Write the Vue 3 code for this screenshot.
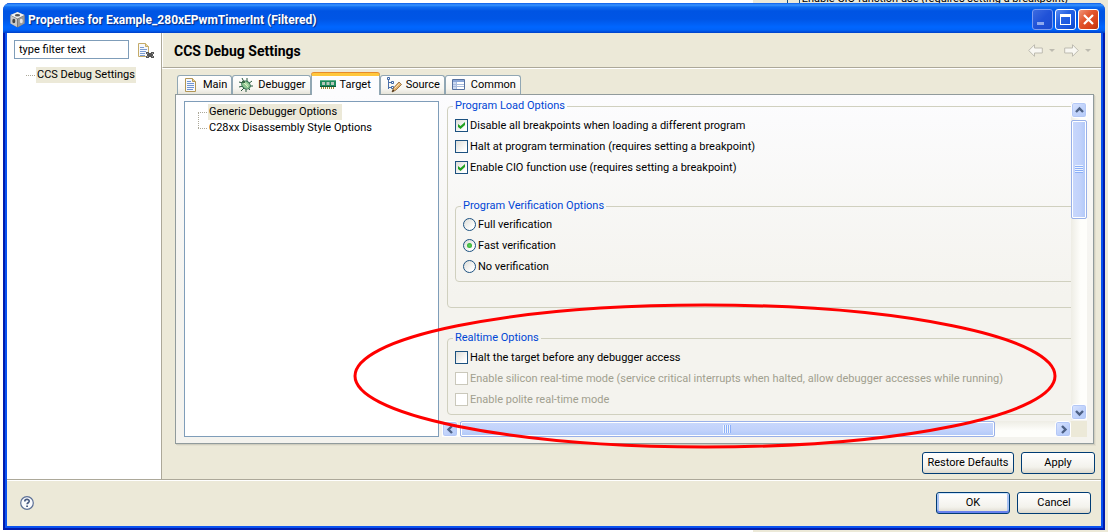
<script setup>
import { ref, reactive } from 'vue'

const filter = ref('type filter text')
const activeTab = ref('Target')
const tabs = [
  { name: 'Main', icon: 'page' },
  { name: 'Debugger', icon: 'bug' },
  { name: 'Target', icon: 'chip' },
  { name: 'Source', icon: 'source' },
  { name: 'Common', icon: 'table' }
]
const loadOptions = reactive([
  { id: 'bp', label: 'Disable all breakpoints when loading a different program', on: true },
  { id: 'halt', label: 'Halt at program termination (requires setting a breakpoint)', on: false },
  { id: 'cio', label: 'Enable CIO function use (requires setting a breakpoint)', on: true }
])
const verification = ref('Fast verification')
const verifyOptions = ['Full verification', 'Fast verification', 'No verification']
const realtimeOptions = reactive([
  { id: 'access', label: 'Halt the target before any debugger access', on: false, disabled: false },
  { id: 'silicon', label: 'Enable silicon real-time mode (service critical interrupts when halted, allow debugger accesses while running)', on: false, disabled: true },
  { id: 'polite', label: 'Enable polite real-time mode', on: false, disabled: true }
])
</script>

<template>
  <div class="desktop">
    <div class="behind" aria-hidden="true">
      <span class="behind-box"></span>
      <span>Enable CIO function use (requires setting a breakpoint)</span>
    </div>
    <section class="window">
      <header class="titlebar">
        <svg class="app-icon" width="17" height="17" viewBox="0 0 17 17">
          <path d="M8.500 1 15.500 4v8.500L8.500 16.500 1.500 12.500V4z" fill="#777" />
          <path d="M8.500 1 15.500 4 8.500 7.500 1.500 4z" fill="#f2f2f2" />
          <path d="M1.500 4.500 8 8v8L1.500 12.500z" fill="#c8c8c8" />
          <path d="M15.500 4.500 9 8v8l6.500-3.500z" fill="#999" />
          <ellipse cx="8.500" cy="4.200" rx="2.600" ry="1.200" fill="#555" />
          <ellipse cx="4.800" cy="10" rx="1.500" ry="2.200" fill="#444" />
          <ellipse cx="12.300" cy="10" rx="1.500" ry="2.200" fill="#e4e4e4" />
        </svg>
        <h1>Properties for Example_280xEPwmTimerInt (Filtered)</h1>
        <button class="cap dim" aria-label="Minimize">
          <svg width="19" height="19" viewBox="0 0 19 19"><path d="M4 12h7v3H4z" fill="#8fa9ee" /></svg>
        </button>
        <button class="cap" aria-label="Maximize">
          <svg width="19" height="19" viewBox="0 0 19 19"><path d="M4 4h11v11H4zM5 7v7h9V7z" fill="#fff" fill-rule="evenodd" /></svg>
        </button>
        <button class="cap close" aria-label="Close">
          <svg width="19" height="19" viewBox="0 0 19 19"><path d="M5 5l9 9M14 5l-9 9" stroke="#fff" stroke-width="2.200" /></svg>
        </button>
      </header>

      <div class="body">
        <aside class="sidebar">
          <div class="filter">
            <input v-model="filter" type="text" aria-label="Filter settings" />
            <button class="plain" aria-label="Clear filter">
              <svg width="16" height="16" viewBox="0 0 16 16">
                <path d="M.5 .5h7l3 3v10H.5z" fill="#f6f8fd" stroke="#c5ab68" />
                <path d="M7.500 .5v3h3" fill="#ecd99f" stroke="#c5ab68" />
                <path d="M2 4.500h4M2 6.500h7M2 8.500h6M2 10.500h5M2 12.500h5" stroke="#7c9ccf" />
                <path d="M8 9h3v1h2V9h3v2h-1v2h1v2h-3v-1h-2v1H8v-2h1v-2H8z" fill="#555" />
                <path d="M9 10h1v1H9zM14 10h1v1h-1zM9 13h1v1H9zM14 13h1v1h-1z" fill="#999" />
              </svg>
            </button>
          </div>
          <ul class="nav-tree">
            <li><a href="#settings">CCS Debug Settings</a></li>
          </ul>
        </aside>

        <main class="main">
          <div class="page-head">
            <h2>CCS Debug Settings</h2>
            <button class="plain" aria-label="Back">
              <svg width="29" height="14" viewBox="0 0 29 14">
                <path d="M.7 6.500 6.500.7v3.300h7.800v5H6.500v3.300z" fill="#f8f7f2" stroke="#bdbbb0" />
                <path d="M21 5h6l-3 3z" fill="#bdbbb0" />
              </svg>
            </button>
            <button class="plain" aria-label="Forward">
              <svg width="29" height="14" viewBox="0 0 29 14">
                <path d="M14.300 6.500 8.500.7v3.300H.7v5h7.800v3.300z" fill="#f8f7f2" stroke="#bdbbb0" />
                <path d="M21 5h6l-3 3z" fill="#bdbbb0" />
              </svg>
            </button>
          </div>

          <div class="folder">
            <div class="tabs" role="tablist">
              <button
                v-for="tab in tabs"
                :key="tab.name"
                role="tab"
                class="tab"
                :class="{ active: tab.name === activeTab }"
                :aria-selected="tab.name === activeTab"
                @click="activeTab = tab.name"
              >
                <svg width="16" height="16" viewBox="0 0 16 16">
                  <g v-if="tab.icon === 'page'">
                    <path d="M2.500 1.500h7l3 3v10h-10z" fill="#f4f8ff" stroke="#b39655" />
                    <path d="M9.500 1.500v3h3" fill="#ecd591" stroke="#b39655" />
                    <path d="M4 4.500h4M4 6.500h7M4 8.500h7M4 10.500h7M4 12.500h6" stroke="#6f94d2" />
                  </g>
                  <g v-else-if="tab.icon === 'bug'">
                    <path d="M4 1l2 4M9 1v4M1 5l4 1M1 10l4-1M3 14l3-3M8 15v-3M12 13l-2-2M15 9h-4M14 4l-4 3" stroke="#27553c" fill="none" />
                    <ellipse cx="8" cy="8" rx="4.600" ry="3.700" transform="rotate(40 8 8)" fill="#8fc794" stroke="#2a6a4b" />
                    <path d="M6 6l4 4M7 5.500l3 3" stroke="#dcf2c6" />
                    <path d="M4 4h3v2H4z" fill="#396a46" />
                  </g>
                  <g v-else-if="tab.icon === 'chip'">
                    <path d="M0 3h16v7H0z" fill="#1f8a5c" />
                    <path d="M0 3h16v1H0z" fill="#62b48c" />
                    <path d="M2 5h3v3H2zM6.500 5h3v3h-3zM11 5h3v3h-3z" fill="#b6c8bb" />
                    <path d="M0 9h16v1H0z" fill="#0c5a3a" />
                    <path d="M1.500 10v2M3.500 10v2M5.500 10v2M7.500 10v2M9.500 10v2M11.500 10v2M13.500 10v2" stroke="#9c8b35" />
                  </g>
                  <g v-else-if="tab.icon === 'source'">
                    <path d="M2.500 3v9M2.500 5.500h3M2.500 10.500h3" stroke="#4a6fa9" fill="none" />
                    <path d="M1.500 .5h2v2h-2zM5.500 4.500h2v2h-2zM5.500 9.500h2v2h-2z" fill="#fff" stroke="#3f68a6" />
                    <path d="M6 15l1.500-4L13 5l2.500 2.500L10 13z" fill="#e5b26c" stroke="#8b6232" stroke-width=".8" />
                    <path d="M6 15l1-2.500L8.500 14z" fill="#3b2b1c" />
                    <path d="M8.500 11.500L13.500 6.500" stroke="#fbe3b8" />
                  </g>
                  <g v-else>
                    <path d="M1.500 2.500h12v10h-12z" fill="#fff" stroke="#56719f" />
                    <path d="M2 3h11v2H2z" fill="#8ba7d8" />
                    <path d="M2 5h3v7H2z" fill="#cbd9f1" />
                    <path d="M2 7.500h11M2 9.500h11M5.500 5v7" stroke="#a9bcdd" />
                  </g>
                </svg>
                <span>{{ tab.name }}</span>
              </button>
            </div>

            <div class="panel" role="tabpanel">
              <ul class="option-list">
                <li><a class="selected" href="#generic">Generic Debugger Options</a></li>
                <li><a href="#disassembly">C28xx Disassembly Style Options</a></li>
              </ul>

              <div class="scroller">
                <form class="viewport" @submit.prevent>
                  <fieldset class="load">
                    <legend>Program Load Options</legend>
                    <div v-for="o in loadOptions" :key="o.id" class="row">
                      <input :id="o.id" v-model="o.on" type="checkbox" />
                      <label :for="o.id">{{ o.label }}</label>
                    </div>
                    <fieldset class="verify">
                      <legend>Program Verification Options</legend>
                      <div v-for="(v, i) in verifyOptions" :key="v" class="row">
                        <input :id="'v' + i" v-model="verification" type="radio" name="verify" :value="v" />
                        <label :for="'v' + i">{{ v }}</label>
                      </div>
                    </fieldset>
                  </fieldset>
                  <fieldset>
                    <legend>Realtime Options</legend>
                    <div v-for="o in realtimeOptions" :key="o.id" class="row">
                      <input :id="o.id" v-model="o.on" type="checkbox" :disabled="o.disabled" />
                      <label :for="o.id">{{ o.label }}</label>
                    </div>
                  </fieldset>
                </form>
                <div class="bar vertical">
                  <button class="arrow" aria-label="Scroll up"><svg width="9" height="9" viewBox="0 0 9 9"><path d="M1 6l3.500-3.500L8 6" /></svg></button>
                  <div class="thumb"><i></i></div>
                  <button class="arrow last" aria-label="Scroll down"><svg width="9" height="9" viewBox="0 0 9 9"><path d="M1 3l3.500 3.500L8 3" /></svg></button>
                </div>
                <div class="bar horizontal">
                  <button class="arrow" aria-label="Scroll left"><svg width="9" height="9" viewBox="0 0 9 9"><path d="M6 1L2.500 4.500 6 8" /></svg></button>
                  <div class="thumb"><i></i></div>
                  <button class="arrow last" aria-label="Scroll right"><svg width="9" height="9" viewBox="0 0 9 9"><path d="M3 1l3.500 3.500L3 8" /></svg></button>
                </div>
                <div class="corner"></div>
              </div>
            </div>
          </div>

          <div class="actions">
            <button class="push wide">Restore Defaults</button>
            <button class="push">Apply</button>
          </div>
        </main>
      </div>

      <footer class="footer">
        <button class="plain help" aria-label="Help">
          <svg width="14" height="14" viewBox="0 0 14 14">
            <circle cx="7" cy="7" r="6.300" fill="#fafbfd" stroke="#5c7096" stroke-width="1.200" />
            <path d="M4.800 5.400c0-2.700 4.400-2.600 4.400-.2 0 1.500-2.100 1.600-2.100 3.100" fill="none" stroke="#46597f" stroke-width="1.600" />
            <path d="M6.200 9.500h1.800v1.600H6.200z" fill="#46597f" />
          </svg>
        </button>
        <button class="push default">OK</button>
        <button class="push">Cancel</button>
      </footer>
    </section>

    <svg class="marker" viewBox="0 0 704 148" preserveAspectRatio="none" aria-hidden="true">
      <ellipse cx="352" cy="74" rx="350" ry="71" fill="none" stroke="#f00" stroke-width="3" />
    </svg>
  </div>
</template>

<style>
body {
  margin: 0;
}
</style>

<style scoped>
* {
  box-sizing: border-box;
}
.desktop {
  position: relative;
  display: flex;
  min-height: 100vh;
  padding: 3px 3px 2px;
  overflow: hidden;
  background: linear-gradient(90deg, #fff 68%, #ece9d8 68%);
  color: #000;
  font: 11px/16px Roboto, "Liberation Sans", sans-serif;
}
.behind {
  position: absolute;
  top: -8px;
  left: 71%;
  display: flex;
  line-height: 14px;
}
.behind-box {
  width: 13px;
  height: 13px;
  margin-right: 2px;
  border: 1px solid #1c5180;
}
button,
input {
  font: inherit;
  color: inherit;
}
ul {
  margin: 0;
  padding: 0;
  list-style: none;
}
a {
  color: inherit;
  text-decoration: none;
}
svg {
  display: block;
}

/* window frame */
.window {
  position: relative;
  display: flex;
  flex: 1;
  flex-direction: column;
  min-width: 0;
  padding: 0 2px 2px;
  border: solid #001cae;
  border-width: 0 2px 2px;
  border-radius: 7px 7px 0 0;
  background: #0a52f0;
}
.titlebar {
  display: flex;
  align-items: center;
  height: 30px;
  margin: 0 -4px;
  padding: 3px 6px 0 6px;
  border-radius: 7px 7px 0 0;
  background: linear-gradient(#0a5be8 0, #3a95ff 2px, #0f6cf0 4px, #0054e3 8px, #0055e5 16px, #0066ff 24px, #0062f8 27px, #0040c8 30px);
}
.titlebar h1 {
  flex: 1;
  margin: 0 0 0 2px;
  color: #fff;
  font-size: 12px;
  font-weight: 700;
  line-height: 16px;
  text-shadow: 1px 1px 1px #0a2a7c;
}
.cap {
  display: grid;
  place-items: center;
  width: 21px;
  height: 21px;
  margin-left: 2px;
  padding: 0;
  border: 1px solid #fff;
  border-radius: 3px;
  background: linear-gradient(135deg, #5c8cf2, #2460e2 40%, #1a56e0 70%, #0d47c8);
}
.cap.dim {
  border-color: #7d9cf0;
  background: linear-gradient(135deg, #3d6be0, #2052d8 50%, #1b4bd0);
}
.cap.close {
  background: linear-gradient(135deg, #f0957a, #e2562f 40%, #d8421a 75%, #b83410);
}
.body {
  display: flex;
  flex: 1;
  background: #ece9d8;
  border-bottom: 1px solid #aca899;
}
.plain {
  padding: 0;
  border: 0;
  background: none;
}

/* left navigation */
.sidebar {
  flex: 0 0 154px;
  padding: 7px 7px 0;
  border-right: 1px solid #aca899;
  background: #fff;
}
.filter {
  display: flex;
  align-items: center;
  gap: 9px;
}
.filter input {
  width: 115px;
  height: 19px;
  padding: 0 4px;
  border: 1px solid #7f9db9;
  background: #fff;
}
.filter button {
  margin-top: 2px;
}
.nav-tree {
  padding: 8px 0 0 12px;
}
.nav-tree li {
  display: flex;
  align-items: center;
}
.nav-tree li::before {
  content: "";
  width: 9px;
  margin-right: 1px;
  border-top: 1px dotted #aca899;
}
.nav-tree a {
  padding: 0 1px;
  background: #ece9d8;
}

/* page area */
.main {
  display: flex;
  flex: 1;
  flex-direction: column;
  min-width: 0;
}
.page-head {
  display: flex;
  align-items: center;
  gap: 7px;
  height: 35px;
  padding: 2px 8px 0 12px;
  border-bottom: 1px solid #aca899;
  border-left: 1px solid #fff;
  box-shadow: 0 1px #fff;
}
.page-head h2 {
  flex: 1;
  margin: 0 0 0 -1px;
  font-size: 14px;
  line-height: 18px;
}
.folder {
  display: flex;
  flex: 1;
  flex-direction: column;
  padding: 5px 7px 0 13px;
}
.tabs {
  display: flex;
  align-items: flex-end;
  padding-left: 2px;
}
.tab {
  display: flex;
  align-items: center;
  gap: 4px;
  height: 19px;
  padding: 0 4px 0 5px;
  border: 1px solid #91a7b4;
  border-bottom: 0;
  border-radius: 3px 3px 0 0;
  background: linear-gradient(#fff, #f7f6f1 70%, #e6e4da);
}
.tab.active {
  position: relative;
  height: 22px;
  margin-bottom: -1px;
  padding: 0 8px 2px;
  border-top: 3px solid #ffc73c;
  background: #fcfcfe;
  box-shadow: inset 0 1px #fff, 0 -1px #e68b2c;
}
.panel {
  display: flex;
  flex: 1;
  gap: 3px;
  padding: 5px 6px 6px 8px;
  border: 1px solid #919b9c;
  background: linear-gradient(#fcfcfe, #f4f3ee 200px);
  box-shadow: 1px 1px #d0cebf, 2px 2px #e3e0d0;
}
.option-list {
  flex: 0 1 255px;
  margin-top: 1px;
  padding: 2px 0 0 13px;
  border: 1px solid #7f9db9;
  background: #fff;
}
.option-list li {
  position: relative;
  display: flex;
  align-items: center;
}
.option-list li::before {
  content: "";
  width: 9px;
  margin-right: 1px;
  border-top: 1px dotted #aca899;
}
.option-list li + li::after {
  content: "";
  position: absolute;
  left: 0;
  bottom: 8px;
  height: 16px;
  border-left: 1px dotted #aca899;
}
.option-list a {
  padding: 0 5px 0 1px;
}
.option-list a.selected {
  background: #ece9d8;
}

/* scrolled settings */
.scroller {
  display: grid;
  flex: 1;
  grid-template-columns: minmax(0, 1fr) 16px;
  grid-template-rows: 1fr 16px;
  min-width: 0;
}
.viewport {
  overflow: hidden;
  padding: 0 0 5px 5px;
}
fieldset {
  width: 117%;
  margin: 0;
  padding: 3px 7px 4px;
  border: 1px solid #d0d0bf;
  border-radius: 4px;
}
fieldset.load {
  margin-bottom: 24px;
  padding-bottom: 25px;
}
fieldset.verify {
  width: auto;
  margin-top: 22px;
  padding-top: 2px;
}
legend {
  margin-left: -2px;
  padding: 0 2px;
  color: #0046d5;
  line-height: 12px;
}
.row {
  display: flex;
  align-items: center;
  gap: 2px;
  height: 21px;
  white-space: nowrap;
}
.row input {
  display: grid;
  place-items: center;
  flex: none;
  width: 13px;
  height: 13px;
  margin: 0;
  appearance: none;
  border: 1px solid #1c5180;
  background: linear-gradient(135deg, #dcdcd7, #fff 80%);
}
.row input[type="radio"] {
  border-radius: 50%;
}
.row input[type="checkbox"]:checked::before {
  content: "";
  width: 7px;
  height: 7px;
  background: #21a121;
  clip-path: polygon(0 29%, 36% 58%, 100% 0, 100% 43%, 36% 100%, 0 72%);
}
.row input[type="radio"]:checked::before {
  content: "";
  width: 5px;
  height: 5px;
  border-radius: 50%;
  background: radial-gradient(#5fd35f, #21a121);
}
.row input:disabled {
  border-color: #cac8bb;
  background: #fff;
}
.row input:disabled + label {
  color: #a19f8f;
}
.bar {
  display: flex;
  gap: 2px;
}
.bar.vertical {
  flex-direction: column;
  margin: 2px 0 1px;
  background: linear-gradient(90deg, #eeede5, #fefefb 60%);
}
.bar.horizontal {
  background: linear-gradient(#eeede5, #fefefb 60%);
}
.arrow {
  display: grid;
  place-items: center;
  flex: none;
  width: 16px;
  height: 16px;
  padding: 0;
  border: 1px solid #fff;
  border-radius: 3px;
  background: linear-gradient(135deg, #dbe5ff, #c1d3fb 50%, #b5cbf8);
  box-shadow: inset 0 0 0 1px #b4c8f6;
}
.arrow.last {
  margin: auto 0 0 auto;
}
.arrow path {
  fill: none;
  stroke: #4d6185;
  stroke-width: 2.4px;
}
.thumb {
  display: grid;
  place-items: center;
  border: 1px solid #98b0e8;
  border-radius: 2px;
  box-shadow: inset 0 0 0 1px #fff;
}
.vertical .thumb {
  height: 31%;
  background: linear-gradient(90deg, #c9d8fc, #c1d2fb 60%, #b0c8f8);
}
.horizontal .thumb {
  width: 85%;
  background: linear-gradient(#c9d8fc, #c1d2fb 60%, #b0c8f8);
}
.thumb i {
  width: 8px;
  height: 8px;
  background: repeating-linear-gradient(#eef4fe 0 1px, #8cb0f8 1px 2px);
}
.horizontal .thumb i {
  background: repeating-linear-gradient(90deg, #eef4fe 0 1px, #8cb0f8 1px 2px);
}
.corner {
  background: #ece9d8;
}

/* push buttons */
.actions {
  display: flex;
  justify-content: flex-end;
  gap: 7px;
  padding: 8px 6px 5px;
}
.push {
  min-width: 74px;
  height: 22px;
  padding: 0 3px;
  border: 1px solid #003c74;
  border-radius: 3px;
  background: linear-gradient(#fff, #f3f2ec 70%, #dcd8cc);
  text-align: center;
}
.push.wide {
  min-width: 92px;
}
.push.default {
  box-shadow: inset 0 1px #cee7ff, inset 0 -2px #6982ee, inset 2px 0 #a9c3f3, inset -2px 0 #a9c3f3;
}
.footer {
  display: flex;
  align-items: center;
  gap: 7px;
  padding: 11px 10px 12px 13px;
  border-top: 1px solid #fff;
  background: #ece9d8;
}
.help {
  margin-right: auto;
}

/* red annotation over the window */
.marker {
  position: absolute;
  left: 353px;
  top: 302px;
  width: calc(100% - 404px);
  height: 148px;
  pointer-events: none;
}
</style>
